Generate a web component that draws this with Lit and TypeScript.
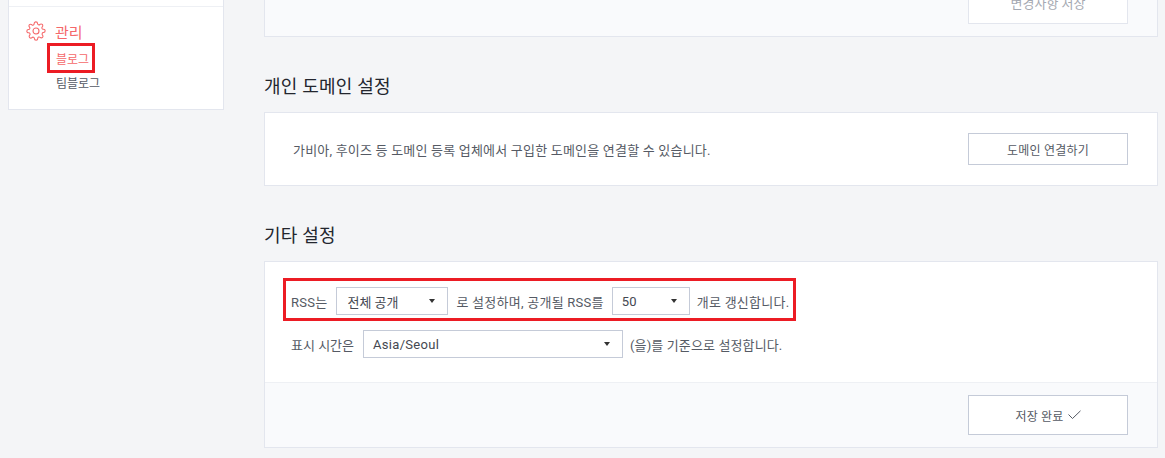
import { LitElement, html, css } from 'lit';
import { customElement } from 'lit/decorators.js';

@customElement('app-root')
export class AppRoot extends LitElement {
  static styles = css`
    :host {
      display: block;
      position: relative;
      width: 1165px;
      height: 458px;
      overflow: hidden;
      background: #f4f5f7;
      font-family: Roboto, "Noto Sans CJK KR", sans-serif;
      font-size: 13px;
      color: #555a64;
    }
    .page {
      display: flex;
      align-items: flex-start;
      gap: 40px;
      padding-left: 8px;
    }
    /* sidebar */
    .side {
      box-sizing: border-box;
      width: 216px;
      margin-top: -20px;
      background: #fff;
      border: 1px solid #e3e6ee;
      padding-top: 25px;
    }
    .side-group {
      border-top: 1px solid #eef0f4;
      padding: 14px 17px 15px;
    }
    .side-title {
      display: flex;
      align-items: center;
      gap: 9px;
      height: 20px;
      font-size: 15px;
      color: #f5686a;
    }
    .side-title svg {
      width: 20px;
      height: 20px;
      flex: none;
    }
    .side-list {
      display: flex;
      flex-direction: column;
      gap: 5px;
      padding: 10px 0 0 30px;
      font-size: 12px;
      line-height: 19px;
    }
    .side-list .on {
      color: #f5686a;
    }
    /* main column */
    .main {
      width: 894px;
      margin-top: -29px;
    }
    h2 {
      margin: 37px 0 12px;
      font-size: 18px;
      font-weight: 400;
      line-height: 26px;
      letter-spacing: 0.2px;
      color: #23262e;
    }
    .card {
      background: #fff;
      border: 1px solid #e3e6ee;
    }
    .foot {
      display: flex;
      justify-content: flex-end;
      padding: 12px 29px 12px 0;
      background: #f9fafc;
    }
    .foot.line {
      border-top: 1px solid #eef0f4;
    }
    .btn {
      box-sizing: border-box;
      display: flex;
      align-items: center;
      justify-content: center;
      gap: 4px;
      width: 160px;
      height: 40px;
      background: #fff;
      border: 1px solid #c5cbd8;
      font-size: 12px;
      letter-spacing: 0.2px;
      color: #555a64;
    }
    .btn.off {
      border-color: #e3e6ee;
      padding-bottom: 3px;
      font-size: 13px;
      letter-spacing: 0;
      color: #a5a9b2;
    }
    .btn.small {
      height: 32px;
    }
    .domain {
      display: flex;
      align-items: center;
      justify-content: space-between;
      padding: 20px 29px 20px 28px;
      letter-spacing: 0.2px;
    }
    .form {
      display: flex;
      flex-direction: column;
      gap: 15px;
      padding: 25px 26px 24px;
    }
    .row {
      display: flex;
      align-items: center;
      gap: 8px;
      height: 28px;
    }
    .row span:first-child {
      margin-right: 1px;
    }
    .row span:last-child {
      margin-left: -1px;
    }
    .wide {
      letter-spacing: 0.25px;
    }
    .mid {
      letter-spacing: 0.12px;
    }
    .select {
      box-sizing: border-box;
      display: flex;
      align-items: center;
      justify-content: space-between;
      height: 28px;
      padding: 0 11px 0 10px;
      background: #fff;
      border: 1px solid #c5cbd8;
      color: #444851;
    }
    .select.latin {
      padding-left: 9px;
      letter-spacing: 0.3px;
    }
    .caret {
      width: 0;
      height: 0;
      border-left: 3.5px solid transparent;
      border-right: 3.5px solid transparent;
      border-top: 4px solid #333;
    }
    .mark {
      position: absolute;
      box-sizing: border-box;
      border: 3px solid #ec1c24;
    }
  `;

  select(label: string, width: number, latin = false) {
    return html`<div class="select ${latin ? 'latin' : ''}" style="width:${width}px">${label}<span class="caret"></span></div>`;
  }

  render() {
    return html`
      <div class="page">
        <aside class="side">
          <div class="side-group">
            <div class="side-title">
              <svg viewBox="0 0 24 24" fill="none" stroke="#f5686a" stroke-width="1.3" stroke-linejoin="round">
                <circle cx="12" cy="12" r="3.6"></circle>
                <path d="M19.4 15a1.65 1.65 0 0 0 .33 1.82l.06.06a2 2 0 1 1-2.83 2.83l-.06-.06a1.65 1.65 0 0 0-2.8 1.17V21a2 2 0 1 1-4 0v-.09a1.65 1.65 0 0 0-2.82-1.11l-.06.06a2 2 0 1 1-2.83-2.83l.06-.06a1.65 1.65 0 0 0-1.17-2.8H3a2 2 0 1 1 0-4h.09a1.65 1.65 0 0 0 1.11-2.82l-.06-.06a2 2 0 1 1 2.83-2.83l.06.06a1.65 1.65 0 0 0 2.8-1.17V3a2 2 0 1 1 4 0v.09a1.65 1.65 0 0 0 2.82 1.11l.06-.06a2 2 0 1 1 2.83 2.83l-.06.06a1.65 1.65 0 0 0 1.17 2.8H21a2 2 0 1 1 0 4h-.09a1.65 1.65 0 0 0-1.51 1.17z"></path>
              </svg>
              관리
            </div>
            <div class="side-list">
              <span class="on">블로그</span>
              <span>팀블로그</span>
            </div>
          </div>
        </aside>

        <main class="main">
          <section class="card">
            <div class="foot">
              <div class="btn off">변경사항 저장</div>
            </div>
          </section>

          <h2>개인 도메인 설정</h2>
          <section class="card domain">
            <span>가비아, 후이즈 등 도메인 등록 업체에서 구입한 도메인을 연결할 수 있습니다.</span>
            <div class="btn small">도메인 연결하기</div>
          </section>

          <h2>기타 설정</h2>
          <section class="card">
            <div class="form">
              <div class="row">
                <span class="wide">RSS는</span>
                ${this.select('전체 공개', 112)}
                <span class="wide">로 설정하며, 공개될 RSS를</span>
                ${this.select('50', 78, true)}
                <span class="wide">개로 갱신합니다.</span>
              </div>
              <div class="row">
                <span>표시 시간은</span>
                ${this.select('Asia/Seoul', 260, true)}
                <span class="mid">(을)를 기준으로 설정합니다.</span>
              </div>
            </div>
            <div class="foot line">
              <div class="btn">
                저장 완료
                <svg width="13" height="10" viewBox="0 0 13 10" fill="none" stroke="#555a64" stroke-width="1">
                  <path d="M.5 4.5 4.5 8.5 12.5 .8"></path>
                </svg>
              </div>
            </div>
          </section>
        </main>
      </div>

      <div class="mark" style="left:47px;top:43px;width:48px;height:30px"></div>
      <div class="mark" style="left:283px;top:278px;width:513px;height:43px"></div>
    `;
  }
}
